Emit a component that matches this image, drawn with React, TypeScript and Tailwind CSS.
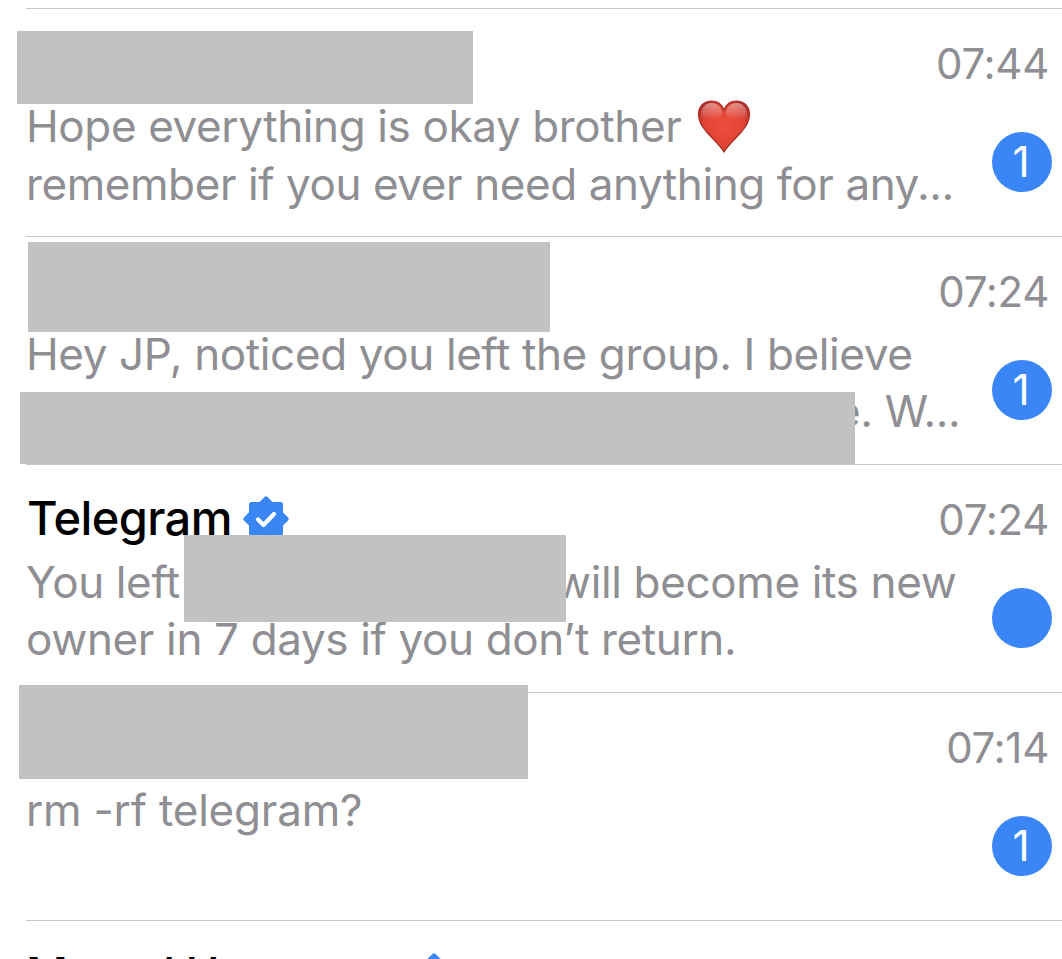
import clsx from "clsx";

interface Redaction {
  className: string;
}

interface PreviewLine {
  text: string;
  className?: string;
  heart?: boolean;
  // text that carries on after a hidden part of the line
  tail?: string;
  tailClassName?: string;
}

interface Chat {
  id: number;
  name?: string;
  time: string;
  lines: PreviewLine[];
  unread: string;
  redactions: Redaction[];
}

const chats: Chat[] = [
  {
    id: 1,
    time: "07:44",
    lines: [
      { text: "Hope everything is okay brother", className: "tracking-[-0.38px]", heart: true },
      { text: "remember if you ever need anything for any...", className: "mt-px tracking-[-0.42px]" },
    ],
    unread: "1",
    redactions: [{ className: "left-[17px] top-[23px] h-[73px] w-[456px]" }],
  },
  {
    id: 2,
    time: "07:24",
    lines: [
      { text: "Hey JP, noticed you left the group. I believe", className: "tracking-[-0.37px]" },
      { text: "", className: "tracking-[-0.35px]", tail: "e. W...", tailClassName: "ml-[809px]" },
    ],
    unread: "1",
    redactions: [
      { className: "left-[28px] top-[6px] h-[90px] w-[522px]" },
      { className: "left-[20px] top-[156px] h-[72px] w-[835px]" },
    ],
  },
  {
    id: 3,
    name: "Telegram",
    time: "07:24",
    lines: [
      { text: "You left", className: "tracking-[-0.36px]", tail: "will become its new", tailClassName: "absolute left-[555px]" },
      { text: "owner in 7 days if you don’t return.", className: "tracking-[-0.35px]" },
    ],
    unread: "",
    redactions: [{ className: "left-[184px] top-[71px] h-[87px] w-[382px]" }],
  },
  {
    id: 4,
    time: "07:14",
    lines: [{ text: "rm -rf telegram?", className: "tracking-[-0.2px]" }],
    unread: "1",
    redactions: [{ className: "left-[19px] top-[-7px] h-[94px] w-[509px]" }],
  },
];

const VerifiedBadge = () => (
  <svg viewBox="0 0 46 46" className="mt-[4px] h-[46px] w-[46px] shrink-0">
    <g fill="#3a86f7" stroke="#3a86f7" strokeWidth="5" strokeLinejoin="round">
      <rect x="8.5" y="8.5" width="29" height="29" />
      <rect x="8.800" y="8.800" width="28.400" height="28.400" transform="rotate(45 23 23)" />
    </g>
    <path d="M15 23.500l5.500 5.500 10.500-11" fill="none" stroke="#fff" strokeWidth="4.2" strokeLinecap="round" strokeLinejoin="round" />
  </svg>
);

const Heart = () => (
  <svg viewBox="0 0 54 54" className="ml-[16px] h-[54px] w-[54px] shrink-0">
    <defs>
      <radialGradient id="heart-fill" cx="0.5" cy="0.5" r="0.62">
        <stop offset="0" stopColor="#ee4e3c" />
        <stop offset="0.65" stopColor="#e04234" />
        <stop offset="1" stopColor="#a82c24" />
      </radialGradient>
      <linearGradient id="heart-shine" x1="0" y1="0" x2="0" y2="1">
        <stop offset="0" stopColor="#fff" stopOpacity="0.45" />
        <stop offset="1" stopColor="#fff" stopOpacity="0" />
      </linearGradient>
    </defs>
    <path
      d="M27 53C24 47.500 17 41 10.500 34C5 28 1.500 22.500 1.500 15.500C1.500 7.500 7 2 14.500 2C20.500 2 25 5.500 27 11C29 5.500 33.500 2 39.500 2C47 2 52.500 7.500 52.500 15.500C52.500 22.500 49 28 43.500 34C37 41 30 47.500 27 53Z"
      fill="url(#heart-fill)"
      stroke="#a62c25"
      strokeWidth="1.200"
    />
    <path d="M4 15C5 7.500 9 4 14.500 4C20 4 24 7.500 25.500 14C25 19 20 21 14 21C8 21 4 19 4 15Z" fill="url(#heart-shine)" />
    <path d="M50 15C49 7.500 45 4 39.500 4C34 4 30 7.500 28.500 14C29 19 34 21 40 21C46 21 50 19 50 15Z" fill="url(#heart-shine)" />
  </svg>
);

const UnreadBadge = ({ count }: { count: string }) => (
  <span className="flex h-[60px] w-[60px] items-center justify-center rounded-full bg-[#3a86f7] pr-[2px] text-[42px] leading-none text-white">
    {count}
  </span>
);

const ChatRow = ({ chat }: { chat: Chat }) => (
  <div className="relative h-[228px]">
    <div className="ml-[26px] flex h-full border-t border-[#c6c6c8]">
      <div className="min-w-0 flex-1">
        <div className="flex h-[88px] items-center pt-[16px]">
          {chat.name && (
            <>
              <h2 className="mr-[11px] pl-px text-[47px] leading-none font-medium tracking-[-0.6px] text-black">{chat.name}</h2>
              <VerifiedBadge />
            </>
          )}
        </div>
        {chat.lines.map((line, i) => (
          <p key={i} className={clsx("flex h-[57px] items-center text-[44px] leading-none whitespace-nowrap text-[#8e8e93]", line.className)}>
            {line.text}
            {line.heart && <Heart />}
            {line.tail && <span className={line.tailClassName}>{line.tail}</span>}
          </p>
        ))}
      </div>
      <div className="flex w-[126px] shrink-0 flex-col items-end">
        <time className="mr-[13px] flex h-[110px] items-center text-[42px] leading-none tracking-[-0.3px] text-[#8e8e93]">{chat.time}</time>
        <div className="mt-[13px] mr-[10px]">
          <UnreadBadge count={chat.unread} />
        </div>
      </div>
    </div>
    {chat.redactions.map((bar) => (
      <div key={bar.className} className={clsx("absolute bg-[#c2c2c2]", bar.className)} />
    ))}
  </div>
);

export default function App() {
  return (
    <main className="h-[959px] w-[1062px] overflow-hidden bg-white pt-[8px] font-['Inter',sans-serif]">
      {chats.map((chat) => (
        <ChatRow key={chat.id} chat={chat} />
      ))}
      <div className="ml-[26px] flex h-[110px] items-start border-t border-[#c6c6c8] pt-[28px]">
        <h2 className="w-[385px] text-[46px] leading-[51px] font-medium tracking-[-0.8px] text-black">Mened Us</h2>
        <VerifiedBadge />
      </div>
    </main>
  );
}
